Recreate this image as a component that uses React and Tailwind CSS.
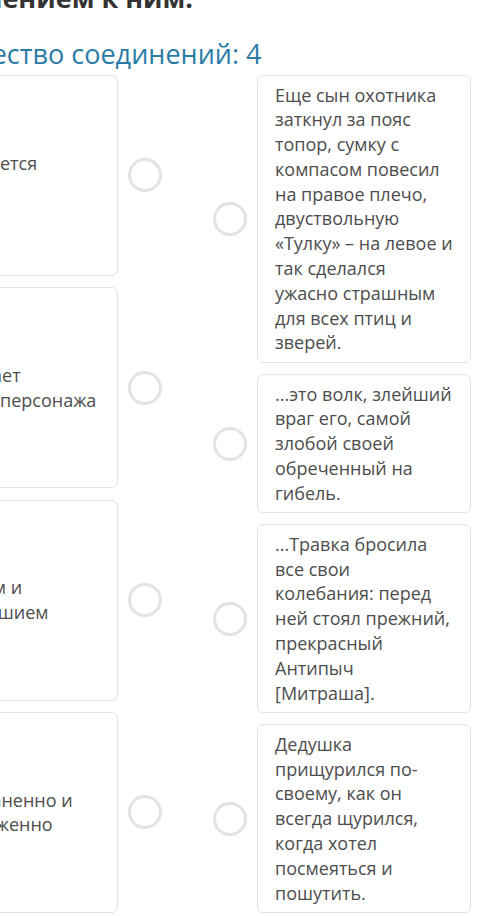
import React from "react";

const leftItems = [
  ["Раскрывается", "в речи"],
  ["Показывает", "характер персонажа"],
  ["С юмором и", "великодушием"],
  ["Не отстраненно и", "не напряженно"],
];

const rightItems = [
  [
    "Еще сын охотника",
    "заткнул за пояс",
    "топор, сумку с",
    "компасом повесил",
    "на правое плечо,",
    "двуствольную",
    "«Тулку» – на левое и",
    "так сделался",
    "ужасно страшным",
    "для всех птиц и",
    "зверей.",
  ],
  ["...это волк, злейший", "враг его, самой", "злобой своей", "обреченный на", "гибель."],
  [
    "...Травка бросила",
    "все свои",
    "колебания: перед",
    "ней стоял прежний,",
    "прекрасный",
    "Антипыч",
    "[Митраша].",
  ],
  [
    "Дедушка",
    "прищурился по-",
    "своему, как он",
    "всегда щурился,",
    "когда хотел",
    "посмеяться и",
    "пошутить.",
  ],
];

function Circle() {
  return (
    <div className="h-[34px] w-[34px] shrink-0 self-center rounded-full border-[3px] border-[#e3e3e3] bg-white" />
  );
}

function Lines({ lines }) {
  return (
    <div>
      {lines.map((l, i) => (
        <span key={i} className="block whitespace-nowrap">
          {l}
        </span>
      ))}
    </div>
  );
}

export default function App() {
  return (
    <div className="h-[916px] w-[500px] overflow-hidden bg-white font-['Open_Sans',sans-serif]">
      <div className="ml-[-96px] w-[567px]">
        <div className="pl-[6px]">
          <h1 className="mt-[-55px] whitespace-nowrap text-[27px] font-bold leading-[35px] text-[#333333]">
            Соотнесите героев с авторским
            <br />
            отношением к ним.
          </h1>
          <p className="mt-[21px] whitespace-nowrap text-[27px] leading-[35px] text-[#2a7ca6]">
            Количество соединений: 4
          </p>
        </div>
        <div className="mt-[4px] flex gap-[51px]">
          <div className="flex w-[258px] flex-col gap-[11.3px]">
            {leftItems.map((lines, i) => (
              <div key={i} className="flex flex-1 gap-[10px]">
                <div className="flex w-[214px] items-center rounded-[6px] border border-[#e3e3e3] bg-white pl-[11px] pr-[8px] text-[18px] leading-[24.8px] text-[#4d4d4d]">
                  <Lines lines={lines} />
                </div>
                <Circle />
              </div>
            ))}
          </div>
          <div className="flex w-[258px] flex-col gap-[11.3px]">
            {rightItems.map((lines, i) => (
              <div key={i} className="flex gap-[10px]">
                <Circle />
                <div className="w-[214px] rounded-[6px] border border-[#e3e3e3] bg-white py-[6.5px] pl-[17px] pr-[6px] text-[18px] leading-[24.8px] text-[#4d4d4d]">
                  <Lines lines={lines} />
                </div>
              </div>
            ))}
          </div>
        </div>
      </div>
    </div>
  );
}
